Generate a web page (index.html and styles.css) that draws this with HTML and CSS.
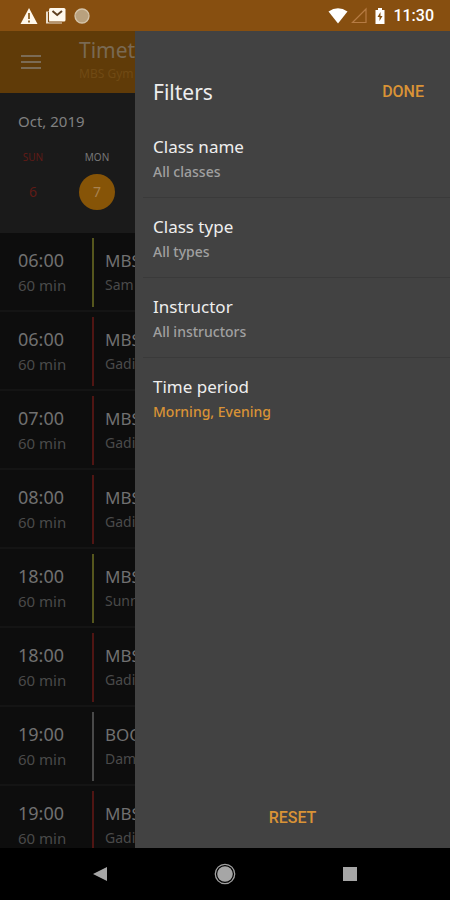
FILE: index.html
```html
<!DOCTYPE html>
<html lang="en">
<head>
<meta charset="utf-8">
<meta name="viewport" content="width=device-width, initial-scale=1">
<title>Timetable filters</title>
<link rel="stylesheet" href="styles.css">
</head>
<body>
<header class="status">
  <svg class="status-icon" viewBox="0 0 18 18" aria-hidden="true"><path d="M9 1 17.500 17H.5Z" fill="#fff8ec"/><path d="M9 6v6M9 13.500v2" stroke="#80500f" stroke-width="1.600"/></svg>
  <svg class="status-mail" viewBox="0 0 21 18" aria-hidden="true"><path d="M1 4.500h3V14h13v2.500H1Z" fill="#e8dccb"/><rect x="4" y="1" width="16.500" height="13.500" rx="1.500" fill="#fff8ec"/><path d="m7.500 4 4.700 4L17 4" fill="none" stroke="#604020" stroke-width="2"/><path d="M3.500 5v10H17" fill="none" stroke="#804b12"/></svg>
  <svg class="status-icon" viewBox="0 0 18 18" aria-hidden="true"><circle cx="9" cy="9" r="7" fill="#b9a17e" stroke="#d5c4aa" stroke-width="1.300"/></svg>
  <div class="status-right">
    <svg class="wifi" viewBox="0 0 20 18" aria-hidden="true"><path d="M.5 4.500Q10-2 19.500 4.500L10 16.500Z" fill="#fff"/></svg>
    <svg class="signal" viewBox="0 0 16 18" aria-hidden="true"><path d="M15 2v13.500H1.500Z" fill="none" stroke="#b67b43" stroke-width="1.200"/></svg>
    <svg class="battery" viewBox="0 0 10 18" aria-hidden="true"><path d="M3 1h4v2h2.500v14H.5V3H3Z" fill="#fff"/><path d="M5.500 5 2.500 10h2v4l3-5h-2Z" fill="#85500f"/></svg>
    <time class="clock">11:30</time>
  </div>
</header>

<main class="screen">
  <section class="timetable" aria-label="Timetable">
    <header class="appbar">
      <button class="menu" aria-label="Menu"><svg viewBox="0 0 20 16" aria-hidden="true"><path d="M0 2h20M0 8h20M0 14h20" stroke="currentColor" stroke-width="2"/></svg></button>
      <div class="heading"><h1>Timetable</h1><p>MBS Gym</p></div>
    </header>
    <section class="calendar">
      <h2>Oct, 2019</h2>
      <div class="days">
        <button class="day sunday"><span>SUN</span><b>6</b></button>
        <button class="day selected"><span>MON</span><b>7</b></button>
      </div>
    </section>
    <ul class="classes">
      <li><div class="when"><b>06:00</b><span>60 min</span></div><div class="what olive"><b>MBS</b><span>Sam</span></div></li>
      <li><div class="when"><b>06:00</b><span>60 min</span></div><div class="what red"><b>MBS</b><span>Gadi</span></div></li>
      <li><div class="when"><b>07:00</b><span>60 min</span></div><div class="what red"><b>MBS</b><span>Gadi</span></div></li>
      <li><div class="when"><b>08:00</b><span>60 min</span></div><div class="what red"><b>MBS</b><span>Gadi</span></div></li>
      <li><div class="when"><b>18:00</b><span>60 min</span></div><div class="what olive"><b>MBS</b><span>Sunn</span></div></li>
      <li><div class="when"><b>18:00</b><span>60 min</span></div><div class="what red"><b>MBS</b><span>Gadi</span></div></li>
      <li><div class="when"><b>19:00</b><span>60 min</span></div><div class="what grey"><b>BOO</b><span>Dam</span></div></li>
      <li><div class="when"><b>19:00</b><span>60 min</span></div><div class="what red"><b>MBS</b><span>Gadi</span></div></li>
    </ul>
  </section>

  <aside class="drawer" aria-label="Filters">
    <header class="drawer-head"><h2>Filters</h2><button class="action">DONE</button></header>
    <div class="filters">
      <button class="filter"><b>Class name</b><span>All classes</span></button>
      <button class="filter"><b>Class type</b><span>All types</span></button>
      <button class="filter"><b>Instructor</b><span>All instructors</span></button>
      <button class="filter active"><b>Time period</b><span>Morning, Evening</span></button>
    </div>
    <button class="action reset">RESET</button>
  </aside>
</main>

<nav class="navbar" aria-label="System">
  <button aria-label="Back"><svg viewBox="0 0 24 24" aria-hidden="true"><path d="M5 12 19 5v14Z" fill="#a6a6a6"/></svg></button>
  <button aria-label="Home"><svg viewBox="0 0 24 24" aria-hidden="true"><circle cx="12" cy="12" r="9.700" fill="none" stroke="#a0a0a0" stroke-width="1.300"/><circle cx="12" cy="12" r="7.800" fill="#a6a6a6"/></svg></button>
  <button aria-label="Recent apps"><svg viewBox="0 0 24 24" aria-hidden="true"><path d="M5 5h14v14H5Z" fill="#a6a6a6"/></svg></button>
</nav>
</body>
</html>
```
FILE: styles.css
```css
* { box-sizing: border-box; }

body {
  margin: 0;
  height: 100vh;
  display: flex;
  flex-direction: column;
  overflow: hidden;
  background: #000;
  font-family: "Noto Sans", sans-serif;
  font-size: 15px;
}

h1, h2, p, ul { margin: 0; padding: 0; font-weight: 400; }
ul { list-style: none; }
b { font-weight: 400; }
svg { display: block; }
button { border: 0; padding: 0; background: none; color: inherit; font: inherit; text-align: left; }

.status {
  flex: none;
  height: 31px;
  padding: 0 16px 0 20px;
  display: flex;
  align-items: center;
  gap: 7px;
  background: #874f10;
  color: #fff;
}
.status-icon { width: 18px; height: 18px; }
.status-mail { width: 21px; height: 18px; }
.status-right { margin-left: auto; display: flex; align-items: center; gap: 3px; }
.wifi { width: 20px; height: 18px; }
.signal { width: 16px; height: 18px; }
.battery { width: 10px; height: 18px; margin: 0 5px; }
.clock { font: 500 16px/20px Roboto, sans-serif; }

.screen { flex: 1; min-height: 0; display: flex; }

.timetable {
  width: 30%;
  overflow: hidden;
  white-space: nowrap;
  background: #0d0d0d;
  color: #666;
}
.appbar {
  height: 62px;
  padding-left: 21px;
  display: flex;
  align-items: center;
  gap: 38px;
  background: #603b08;
}
.menu { flex: none; width: 20px; color: #7b6b55; }
.heading h1 { font-size: 21px; line-height: 24px; color: #796953; }
.heading p { font-size: 12px; line-height: 24px; color: #704a14; }

.calendar { height: 140px; padding-top: 16px; background: #1a1a1a; }
.calendar h2 { padding-left: 18px; font-size: 15px; line-height: 24px; color: #808080; }
.days { display: flex; padding: 14px 0 0 1px; }
.day { flex: none; width: 64px; display: flex; flex-direction: column; align-items: center; }
.day span { font-size: 10px; line-height: 20px; }
.day b { width: 36px; line-height: 36px; margin-top: 7px; border-radius: 50%; text-align: center; font-size: 14px; }
.sunday { color: #601b16; }
.selected { color: #777; }
.selected b { background: #865407; color: #a88352; }

.classes li { height: 79px; display: flex; border-bottom: 2px solid #141414; }
.when { flex: none; width: 92px; padding: 15px 0 0 18px; }
.what { flex: none; margin: 5px 0 3px; padding: 10px 0 0 11px; border-left: 2px solid #501513; }
.when b, .what b { display: block; font-size: 18px; line-height: 25px; color: #707070; }
.what b { font-size: 17px; }
.when span, .what span { display: block; line-height: 24px; color: #4a4a4a; }
.what span { font-size: 14px; }
.what.olive { border-color: #55561d; }
.what.grey { border-color: #494949; }

.drawer { flex: 1; display: flex; flex-direction: column; background: #424242; color: #eee; }
.drawer-head { padding: 46px 26px 11px 18px; display: flex; align-items: center; justify-content: space-between; }
.drawer-head h2 { font-size: 21px; line-height: 30px; }
.action { font: 500 16px/24px Roboto, sans-serif; color: #d99336; }
.filters { display: flex; flex-direction: column; }
.filter { height: 80px; margin-left: 8px; padding: 16px 0 0 10px; border-bottom: 1px solid #3a3a3a; display: flex; flex-direction: column; }
.filter b { font-size: 17px; line-height: 26px; }
.filter span { font-size: 14px; line-height: 24px; font-weight: 500; color: #a0a0a0; }
.filter.active { border: 0; }
.filter.active span { color: #d99336; }
.reset { margin: auto auto 18px; }

.navbar { flex: none; height: 52px; padding: 0 38px; display: flex; align-items: center; justify-content: space-around; }
.navbar svg { width: 24px; height: 24px; }
```
